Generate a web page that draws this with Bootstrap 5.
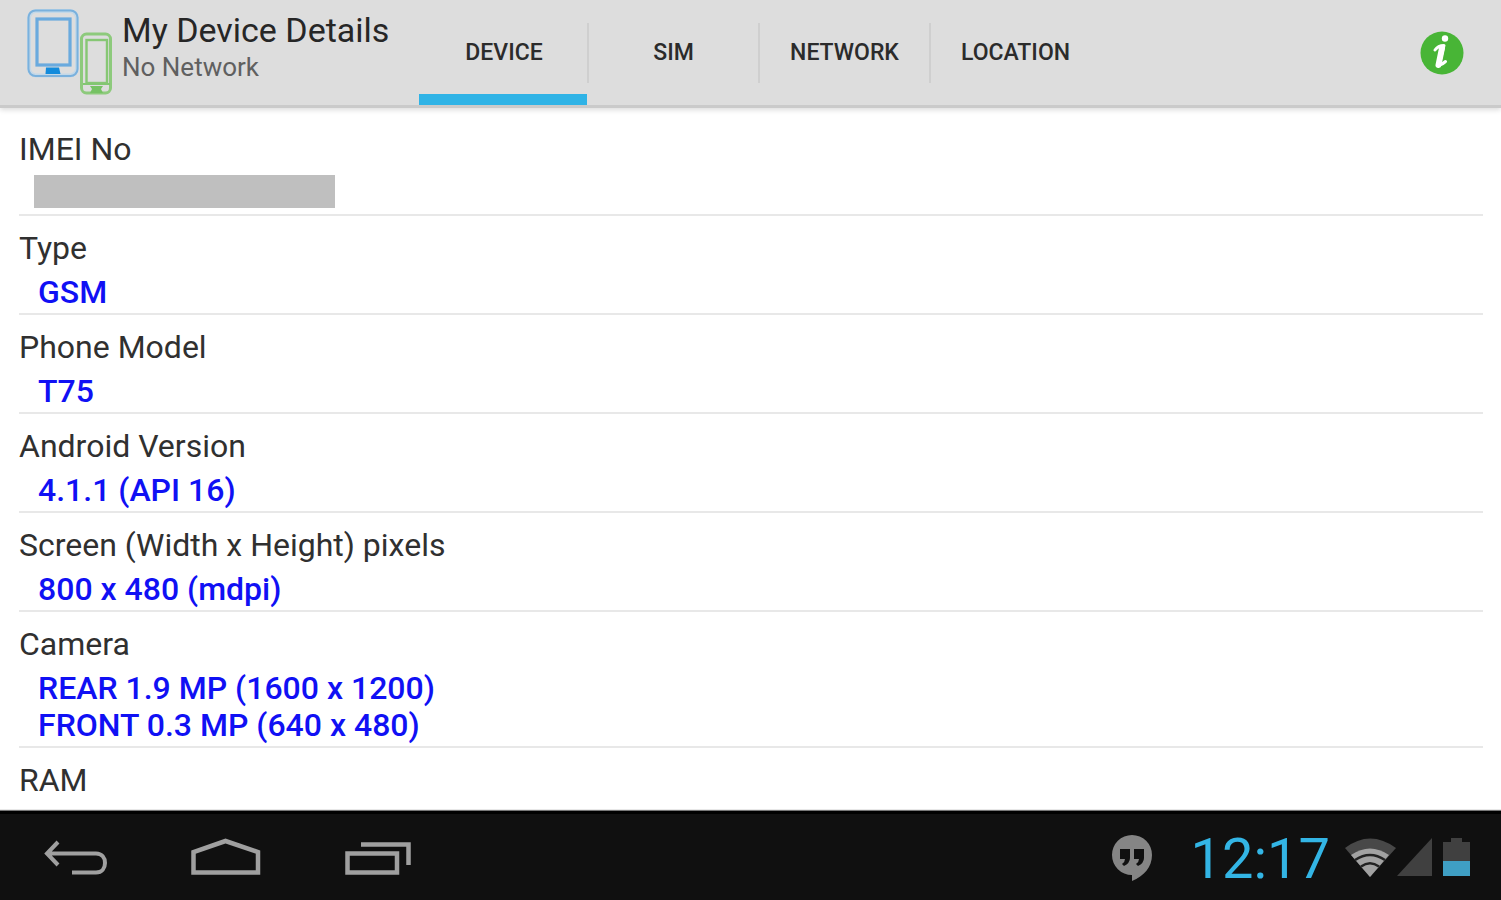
<!DOCTYPE html>
<html lang="en">
<head>
<meta charset="utf-8">
<meta name="viewport" content="width=device-width, initial-scale=1">
<title>My Device Details</title>
<link href="https://cdn.jsdelivr.net/npm/bootstrap@5.3.0/dist/css/bootstrap.min.css" rel="stylesheet">
<style>
body { font-family: Roboto, "Liberation Sans", sans-serif; color: #303030; background: #fff; }
.action-bar { background: #ddd; border-bottom: 3px solid #cacaca; box-shadow: 0 2px 5px rgba(0,0,0,.14); height: 108px; z-index: 1; }
.brand { width: 419px; padding-left: 27px; }
.brand-icon { width: 86px; height: 86px; margin: 9px 9px 0 0; }
.brand-title { font-size: 34px; line-height: 38px; color: #262626; margin-top: 11px; }
.brand-sub { font-size: 26px; line-height: 36px; color: #606060; }
.tabs-row .nav-link { width: 171px; height: 105px; padding: 0; border-radius: 0; font-size: 23px; font-weight: 500; color: #2b2b2b; border-bottom: 11px solid transparent; }
.tabs-row .nav-link span { display: block; height: 60px; line-height: 60px; margin-top: 12px; border-left: 2px solid #cfcfcf; }
.tabs-row .nav-link.active { border-bottom-color: #2fb3e6; width: 168px; }
.tabs-row .nav-link.active span { border-color: transparent; }
.info-btn { width: 44px; height: 44px; margin-right: 37px; }
.details { padding: 9px 18px 0 19px; min-height: 0; }
.detail-row { border-bottom: 2px solid #e8e8e8; padding: 13px 0 2px; }
.detail-row dt { font-weight: 400; font-size: 32px; line-height: 38px; margin-bottom: 7px; }
.detail-row dd { font-weight: 500; font-size: 32px; line-height: 37px; color: #1010f4; margin: 0; padding-left: 19px; }
.masked { height: 33px; width: 301px; background: #bfbfbf; margin: 0 0 4px -4px; }
.system-bar { background: #101010; border-top: 3px solid #000; height: 89px; padding-top: 2px; box-shadow: 0 -1px 1px #777; z-index: 1; }
.sys-keys { padding-left: 40px; gap: 80px; }
.status { padding-right: 31px; }
.clock { font-size: 56px; line-height: 60px; color: #33b5e5; margin: 2px 14px 0 38px; }
</style>
</head>
<body>
<div class="vh-100 d-flex flex-column overflow-hidden">
  <header class="action-bar d-flex flex-shrink-0 position-relative">
    <div class="brand d-flex flex-shrink-0">
      <svg class="brand-icon flex-shrink-0" viewBox="27 9 86 86" fill="none" aria-hidden="true">
        <rect x="29" y="11" width="48" height="64.500" rx="7" stroke="#c3d8e8" stroke-width="4"/>
        <rect x="28.500" y="10.500" width="49" height="65.500" rx="7" stroke="#7ab1dd" stroke-width="2"/>
        <rect x="37" y="19" width="33" height="46" stroke="#6aaade" stroke-width="3.200"/>
        <path d="M46 67.500h13l1.500 6.500h-15z" fill="#128bdc"/>
        <rect x="81.500" y="34" width="29" height="59" rx="5" stroke="#8dca7c" stroke-width="3"/>
        <rect x="86.500" y="40" width="20.500" height="43" stroke="#86c774" stroke-width="2.400"/>
        <path d="M83 84h27" stroke="#83c672" stroke-width="2"/>
        <path d="M90 86h13l-2 3 2 4H90l2-4z" fill="#76c264"/>
      </svg>
      <div class="text-nowrap">
        <h1 class="brand-title fw-normal mb-0">My Device Details</h1>
        <div class="brand-sub">No Network</div>
      </div>
    </div>
    <nav class="tabs-row nav flex-nowrap text-center" aria-label="Sections">
      <a class="nav-link active d-flex flex-column justify-content-center" aria-current="page" href="#device"><span>DEVICE</span></a>
      <a class="nav-link d-flex flex-column justify-content-center" href="#sim"><span>SIM</span></a>
      <a class="nav-link d-flex flex-column justify-content-center" href="#network"><span>NETWORK</span></a>
      <a class="nav-link d-flex flex-column justify-content-center" href="#location"><span>LOCATION</span></a>
    </nav>
    <button class="info-btn btn p-0 border-0 ms-auto align-self-center d-flex" type="button" aria-label="About">
      <svg width="44" height="44" viewBox="0 0 44 44" aria-hidden="true">
        <circle cx="22" cy="22" r="21.500" fill="#48b536"/>
        <circle cx="25" cy="7.500" r="3.200" fill="#fff"/>
        <path d="M15 19c2-3 5-4.500 9-4.500l-4.500 18c-.3 2 2 1.500 6-2" fill="none" stroke="#fff" stroke-width="3" stroke-linejoin="round" stroke-linecap="round"/>
        <path d="M22 17l-3.500 17" stroke="#fff" stroke-width="6" stroke-linecap="round"/>
      </svg>
    </button>
  </header>

  <main class="details flex-grow-1 overflow-hidden">
    <dl class="mb-0" id="device">
      <div class="detail-row"><dt>IMEI No</dt><dd><div class="masked"></div></dd></div>
      <div class="detail-row"><dt>Type</dt><dd>GSM</dd></div>
      <div class="detail-row"><dt>Phone Model</dt><dd>T75</dd></div>
      <div class="detail-row"><dt>Android Version</dt><dd>4.1.1 (API 16)</dd></div>
      <div class="detail-row"><dt>Screen (Width x Height) pixels</dt><dd>800 x 480 (mdpi)</dd></div>
      <div class="detail-row"><dt>Camera</dt><dd>REAR 1.9 MP (1600 x 1200)<br>FRONT 0.3 MP (640 x 480)</dd></div>
      <div class="detail-row border-0"><dt>RAM</dt></div>
    </dl>
  </main>

  <footer class="system-bar d-flex align-items-center flex-shrink-0 position-relative">
    <div class="sys-keys d-flex align-items-center">
      <button class="btn p-0 border-0 d-flex" type="button" aria-label="Back">
        <svg width="70" height="44" viewBox="40 836 70 44" fill="none" stroke="#a0a0a0" stroke-width="4" aria-hidden="true"><path d="M58 842L47 853.500L58 865M47 853.500H96C102 853.500 105 858 105 863C105 868 102 872.500 96 872.500H72"/></svg>
      </button>
      <button class="btn p-0 border-0 d-flex" type="button" aria-label="Home">
        <svg width="72" height="44" viewBox="190 836 72 44" fill="none" stroke="#a0a0a0" stroke-width="4.500" aria-hidden="true"><path d="M193.500 872.500V852L225.500 841L258 852V872.500Z"/></svg>
      </button>
      <button class="btn p-0 border-0 d-flex" type="button" aria-label="Recent apps">
        <svg width="72" height="44" viewBox="342 836 72 44" fill="none" stroke="#a0a0a0" stroke-width="4.500" aria-hidden="true"><path d="M347.500 853.500H397V872.500H347.500ZM361 844.500H408.500V865"/></svg>
      </button>
    </div>
    <div class="status d-flex align-items-center ms-auto">
      <svg width="42" height="48" viewBox="1111 833 42 48" role="img" aria-label="Hangouts message">
        <path d="M1132 834a20 20 0 0 1 20 20c0 12-8 21-20 26v-6a20 20 0 0 1 0-40z" fill="#858585"/>
        <path d="M1120 848h10v9q0 5-6 8l-2-2q3-2 3-5h-5zM1134 848h10v9q0 5-6 8l-2-2q3-2 3-5h-5z" fill="#101010"/>
      </svg>
      <time class="clock">12:17</time>
      <svg width="126" height="44" viewBox="1344 834 126 44" role="img" aria-label="Wi-Fi, no signal, battery half full">
        <path d="M1345 846Q1370 827 1396 846L1370 875Z" fill="#484848"/>
        <path d="M1351 853Q1370 840 1389 853L1370 875Z" fill="#a2a2a2"/>
        <path d="M1355 858Q1370 848 1385 858M1361 864.500Q1370 858 1379 864.500" fill="none" stroke="#222" stroke-width="2.500"/>
        <path d="M1397 874L1432 836V874Z" fill="#404040"/>
        <path d="M1443 840H1451V836H1462V840H1470V859H1443Z" fill="#404040"/>
        <path d="M1443 859H1470V874H1443Z" fill="#3f9fc4"/>
      </svg>
    </div>
  </footer>
</div>
<script src="https://cdn.jsdelivr.net/npm/bootstrap@5.3.0/dist/js/bootstrap.bundle.min.js"></script>
</body>
</html>
